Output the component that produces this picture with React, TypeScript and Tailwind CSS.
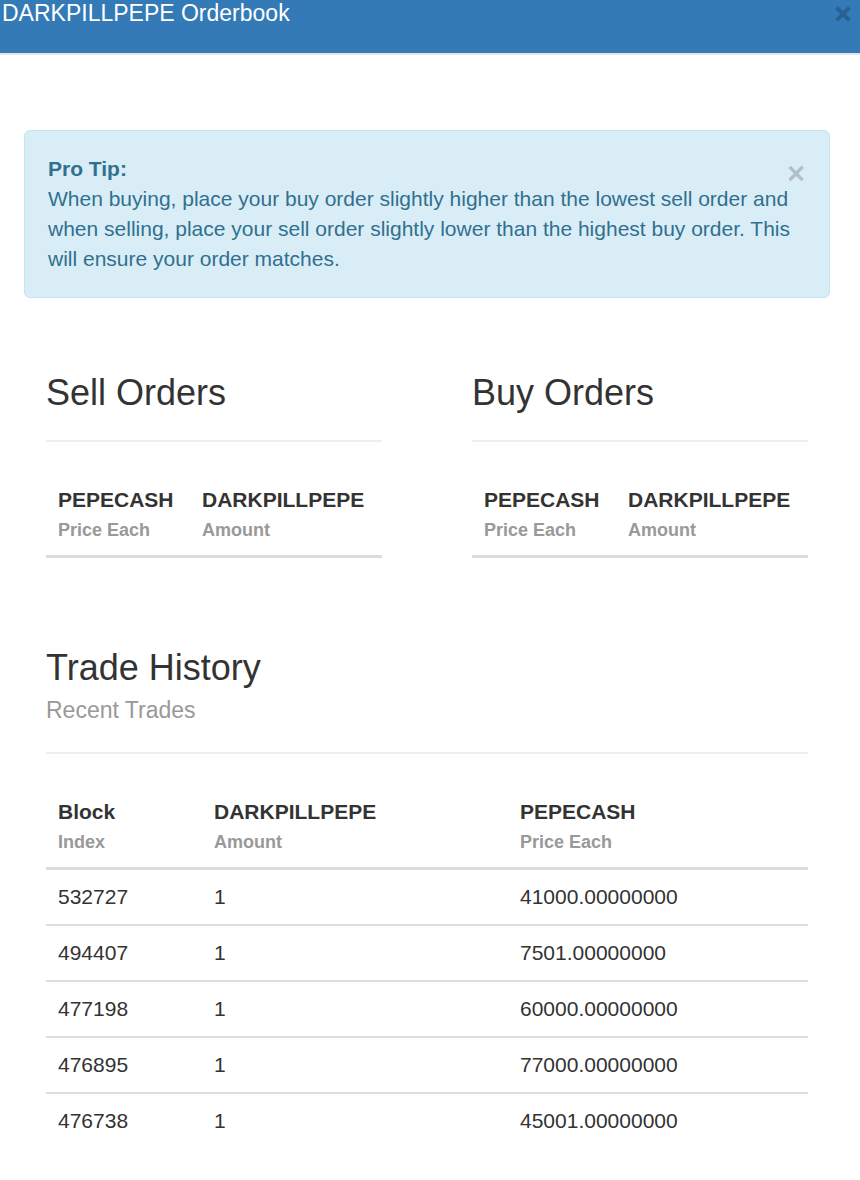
import React from "react";

const trades = [
  ["532727", "1", "41000.00000000"],
  ["494407", "1", "7501.00000000"],
  ["477198", "1", "60000.00000000"],
  ["476895", "1", "77000.00000000"],
  ["476738", "1", "45001.00000000"],
];

function HeadCell({ title, sub, className }: { title: string; sub: string; className: string }) {
  return (
    <div className={"pl-[12px] pt-[13px] pb-[10px] " + className}>
      <div className="text-[21px] leading-[30px] font-bold text-[#333]">{title}</div>
      <div className="text-[18px] leading-[30px] font-bold text-[#999]">{sub}</div>
    </div>
  );
}

function OrderBox({ heading }: { heading: string }) {
  return (
    <div className="w-[336px]">
      <h3 className="text-[36px] leading-[40px] text-[#333]">{heading}</h3>
      <div className="mt-[27px] h-[2px] bg-[#eee]" />
      <div className="mt-[30px] flex border-b-[3px] border-[#ddd]">
        <HeadCell title="PEPECASH" sub="Price Each" className="w-[144px]" />
        <HeadCell title="DARKPILLPEPE" sub="Amount" className="flex-1" />
      </div>
    </div>
  );
}

export default function App() {
  return (
    <div className="min-h-[1180px] bg-white font-['Liberation_Sans',Arial,sans-serif] text-[#333]">
      <div className="relative h-[55px] bg-[#337ab7] border-b-2 border-[#e5e5e5]">
        <h4 className="pl-[2px] text-[23px] leading-[26px] text-white">DARKPILLPEPE Orderbook</h4>
        <svg
          className="absolute right-[9px] top-[6px]"
          width="16"
          height="16"
          viewBox="0 0 16 16"
          stroke="#296292"
          strokeWidth="4"
          strokeLinecap="square"
        >
          <path d="M3 3 L13 13 M13 3 L3 13" />
        </svg>
      </div>

      <div className="relative mt-[75px] ml-[24px] w-[806px] rounded-[6px] border border-[#bce8f1] bg-[#d9edf7] pl-[23px] pr-[20px] py-[23px] text-[21px] leading-[30px] text-[#31708f]">
        <span className="absolute right-[24px] top-[27px] text-[31px] leading-[31px] font-bold text-black/20">
          ×
        </span>
        <strong>Pro Tip:</strong>
        <br />
        When buying, place your buy order slightly higher than the lowest sell order and when
        selling, place your sell order slightly lower than the highest buy order. This will
        ensure your order matches.
      </div>

      <div className="pl-[46px] w-[808px]">
        <div className="mt-[75px] flex gap-[90px]">
          <OrderBox heading="Sell Orders" />
          <OrderBox heading="Buy Orders" />
        </div>

        <h3 className="mt-[90px] text-[36px] leading-[40px] text-[#333]">Trade History</h3>
        <div className="mt-[11px] text-[23px] leading-[23px] text-[#999]">Recent Trades</div>
        <div className="mt-[30px] h-[2px] bg-[#eee]" />

        <div className="mt-[30px] flex border-b-[3px] border-[#ddd]">
          <HeadCell title="Block" sub="Index" className="w-[156px]" />
          <HeadCell title="DARKPILLPEPE" sub="Amount" className="w-[306px]" />
          <HeadCell title="PEPECASH" sub="Price Each" className="flex-1" />
        </div>
        {trades.map((t, i) => (
          <div
            key={t[0]}
            className={
              "flex text-[21px] leading-[30px] text-[#333] " +
              (i > 0 ? "border-t-2 border-[#ddd]" : "")
            }
          >
            <div className="w-[156px] px-[12px] py-[12px]">{t[0]}</div>
            <div className="w-[306px] px-[12px] py-[12px]">{t[1]}</div>
            <div className="flex-1 px-[12px] py-[12px]">{t[2]}</div>
          </div>
        ))}
      </div>
    </div>
  );
}
